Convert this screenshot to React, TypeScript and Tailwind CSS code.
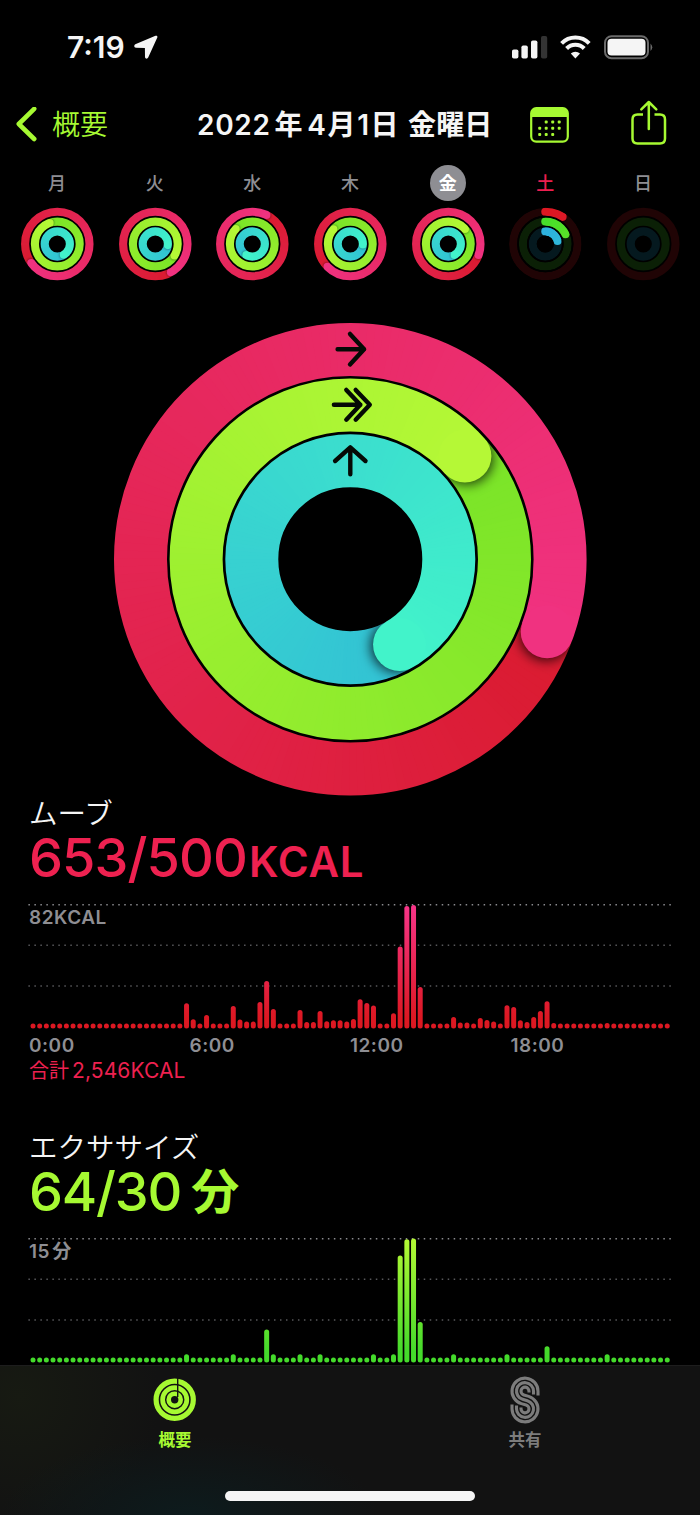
import { useId } from "react";
import clsx from "clsx";

const FONT = "font-['Inter','Noto_Sans_CJK_JP',sans-serif]";

type RingKind = {
  from: [number, number, number];
  to: [number, number, number];
  track: string;
};

const KINDS: RingKind[] = [
  { from: [218, 27, 48], to: [240, 50, 128], track: "#200405" },
  { from: [122, 228, 40], to: [181, 248, 54], track: "#0b2006" },
  { from: [50, 193, 212], to: [66, 243, 202], track: "#05191f" },
];

// colours of the very first degrees of each ring
const FRESH: [number, number, number][] = [
  [222, 24, 34],
  [72, 222, 42],
  [46, 178, 222],
];

const days = [
  { name: "月", ends: [594, 700, 509] },
  { name: "火", ends: [511, 481, 455] },
  { name: "水", ends: [386, 672, 568] },
  { name: "木", ends: [585, 671, 452] },
  { name: "金", ends: [470, 408, 510], active: true },
  { name: "土", ends: [32.5, 64, 76], holiday: true },
  { name: "日", ends: [0, 0, 0] },
];

function polar(c: number, r: number, deg: number) {
  const a = ((deg - 90) * Math.PI) / 180;
  return [c + r * Math.cos(a), c + r * Math.sin(a)];
}

function mix(a: number[], b: number[], t: number) {
  const [r, g, bl] = a.map((v, i) => Math.round(v + (b[i] - v) * t));
  return `rgb(${r},${g},${bl})`;
}

type RingProps = {
  c: number;
  r: number;
  width: number;
  end: number;
  index: number;
};

function Ring({ c, r, width, end, index }: RingProps) {
  const id = useId();
  const kind = KINDS[index];
  if (end === 0) {
    return <circle cx={c} cy={c} r={r} fill="none" stroke={kind.track} strokeWidth={width} />;
  }

  const over = end >= 360;
  const start = over ? end - 360 : 0;
  const from = over ? kind.from : FRESH[index];
  const to = over ? kind.to : kind.from;
  const step = 2;
  const count = Math.ceil((end - start) / step);
  const [ex, ey] = polar(c, r, end);
  const [sx, sy] = polar(c, r, start);
  const [shx, shy] = polar(c, r, end + (width * 3) / r);

  // each piece runs under the next ones, so no seams show
  const segment = (i: number) => {
    const a = start + i * step;
    const b = Math.min(a + step + 8, end);
    const [x1, y1] = polar(c, r, a);
    const [x2, y2] = polar(c, r, b);
    return (
      <path
        key={i}
        d={`M${x1} ${y1}A${r} ${r} 0 0 1 ${x2} ${y2}`}
        fill="none"
        stroke={mix(from, to, over ? i / count : (i / count) * 0.3)}
        strokeWidth={over ? width + 1.5 : width}
      />
    );
  };
  const all = Array.from({ length: count }, (_, i) => i);

  return (
    <g mask={`url(#${id}m)`}>
      <mask id={`${id}m`} maskUnits="userSpaceOnUse" x="-1" y="-1" width={c * 2 + 2} height={c * 2 + 2}>
        <circle cx={c} cy={c} r={r} fill="none" stroke="#fff" strokeWidth={width} />
      </mask>
      {!over && (
        <>
          <circle cx={c} cy={c} r={r} fill="none" stroke={kind.track} strokeWidth={width} />
          <circle cx={sx} cy={sy} r={width / 2} fill={mix(from, to, 0)} />
        </>
      )}
      {all.map(segment)}
      {over && (
        <>
          <filter id={`${id}f`} x="-50%" y="-50%" width="200%" height="200%">
            <feGaussianBlur stdDeviation={width * 0.11} />
          </filter>
          <circle
            cx={shx}
            cy={shy}
            r={width / 2}
            fill="#000"
            fillOpacity={width > 20 ? 0.75 : 0.4}
            filter={`url(#${id}f)`}
          />
          {all.slice(Math.floor(count * 0.7)).map(segment)}
        </>
      )}
      <circle cx={ex} cy={ey} r={width / 2} fill={over ? mix(from, to, 1) : mix(from, to, 0.3)} />
    </g>
  );
}

function SmallRings({ ends }: { ends: number[] }) {
  return (
    <svg width="74" height="74" viewBox="-0.3 0 74 74">
      {[32.2, 22.4, 12.6].map((r, i) => (
        <Ring key={r} c={37} r={r} width={8.1} end={ends[i]} index={i} />
      ))}
    </svg>
  );
}

function BigRings() {
  return (
    <svg width="474" height="474" viewBox="-0.3 -0.2 474 474">
      <Ring c={237} r={209.8} width={53} end={470.2} index={0} />
      <Ring c={237} r={154.2} width={53} end={408} index={1} />
      <Ring c={237} r={98.5} width={53} end={510} index={2} />
      <g fill="none" stroke="#050a05" strokeWidth="4.4" strokeLinecap="round" strokeLinejoin="round">
        <path d="M224.3 27h26.5M236.7 11.7 250.8 27l-14.1 15.3" />
        <path d="M220.6 82.5h26.5M233 67.7l14 14.8-14 15M242.4 67.7l14.1 14.8-14.1 15" />
        <path d="M237 152v-26.5M221.8 138.8 237 125.2l15.2 13.6" />
      </g>
    </svg>
  );
}

const SLOTS = 96;
const DOT = 5;

const moveBars: Record<number, number> = {
  23: 25.3, 24: 9.3, 26: 13.7, 30: 22.5, 31: 9.2, 32: 7, 33: 7, 34: 26.7, 35: 47.7, 36: 19.7,
  40: 18.7, 41: 6.5, 42: 6.5, 43: 17.7, 44: 7.3, 45: 8.3, 46: 8.3, 47: 7, 48: 9.7, 49: 29.3,
  50: 25.7, 51: 23, 54: 15.3, 55: 82, 56: 122.7, 57: 123.7, 58: 41.7, 63: 11.7, 64: 6, 65: 6,
  67: 10.7, 68: 8.5, 69: 7, 71: 23.3, 72: 21.7, 73: 8.3, 74: 6.7, 75: 11.7, 76: 17.7, 77: 27.3,
  78: 5.7, 86: 5.7,
};

const exerciseBars: Record<number, number> = {
  23: 8.3, 30: 8.3, 35: 33, 36: 8.3, 40: 8.3, 43: 8.3, 51: 8.3, 54: 8.3, 55: 107, 56: 123.3,
  57: 124, 58: 40.7, 63: 8.3, 71: 8.3, 77: 16.3, 86: 8.3,
};

type ChartProps = {
  bars: Record<number, number>;
  top: string;
  bottom: string;
  label: string;
};

function Chart({ bars, top, bottom, label }: ChartProps) {
  const id = useId();
  return (
    <div className="relative h-[126px]">
      <svg className="block" width="644" height="126" viewBox="0 0 644 126">
        <linearGradient id={id} gradientUnits="userSpaceOnUse" x1="0" y1="125" x2="0" y2="1">
          <stop offset="0.08" stopColor={bottom} />
          <stop offset="1" stopColor={top} />
        </linearGradient>
        {[1.7, 42.3, 83].map((y, i) => (
          <line
            key={y}
            x1="0.4"
            x2="643"
            y1={y}
            y2={y}
            stroke={i === 0 ? "#8a8a8e" : "#58585b"}
            strokeWidth="1.5"
            strokeDasharray="1.5 4.49"
          />
        ))}
        {Array.from({ length: SLOTS }, (_, i) => {
          const h = bars[i] ?? DOT;
          return (
            <rect
              key={i}
              x={2.5 + i * 6.676}
              y={125.6 - h}
              width={DOT}
              height={h}
              rx={DOT / 2}
              fill={`url(#${id})`}
            />
          );
        })}
      </svg>
      <span className="absolute left-[1px] top-[5px] whitespace-nowrap text-[19px] leading-[20px] font-semibold tracking-[0.5px] [word-spacing:-3px] text-[#8e8e93]">
        {label}
      </span>
    </div>
  );
}

function StatusBar() {
  return (
    <div className="flex h-[92px] items-center pt-[2px] pl-[67px] pr-[47px] text-[#f5f5f5]">
      <span className="w-[59px] text-[30px] font-semibold">7:19</span>
      <svg className="ml-[8px]" width="25" height="25" viewBox="0 0 25 25">
        <path
          d="M21.5.8 1.3 9.3C-.4 10.2.1 12.6 2 12.7L10.9 12.9 11 22C11.2 24 13.4 24.3 14.2 22.6L23.3 2.6C23.8 1.2 22.8.3 21.5.8Z"
          fill="currentColor"
        />
      </svg>
      <svg className="ml-auto" width="142" height="26" viewBox="0 0 142 26" fill="currentColor">
        <rect x="1" y="15.5" width="6.4" height="9" rx="1.8" />
        <rect x="10.4" y="11.5" width="6.4" height="13" rx="1.8" />
        <rect x="20" y="6.500" width="6.4" height="18" rx="1.8" />
        <rect x="30" y="2" width="6.2" height="22.5" rx="1.8" fill="#333" />
        <g fill="none" stroke="currentColor" strokeWidth="4">
          <path d="M50.6 9.3a19.2 19.2 0 0 1 27.6 0" />
          <path d="M55.6 14.5a12.2 12.2 0 0 1 17.6 0" />
        </g>
        <path d="M64.4 24.5 59.8 19.6a6.6 6.6 0 0 1 9.2 0Z" />
        <rect x="94" y="2.2" width="43" height="22" rx="6.5" fill="none" stroke="#6b6b6b" strokeWidth="2" />
        <rect x="96.5" y="4.8" width="38" height="16.8" rx="4" />
        <path d="M139.5 9.5q3.5 3.8 0 7.6Z" fill="#6b6b6b" />
      </svg>
    </div>
  );
}

function NavBar() {
  return (
    <div className="flex h-[66px] items-center pl-[16px] text-[#a6f932]">
      <svg width="22" height="36" viewBox="0 0 22 36">
        <path d="M18.2 1.8 2.8 17l15.4 15" fill="none" stroke="currentColor" strokeWidth="4.6" strokeLinecap="round" strokeLinejoin="round" />
      </svg>
      <span className="ml-[14px] w-[145px] text-[28px] font-[350]">概要</span>
      <h1 className="w-[301px] whitespace-nowrap text-[28px] font-semibold tracking-[0.7px] text-[#f5f5f5]">
        2022<span className="mx-[4px]">年</span>
        <span className="tracking-[1.6px]">4月1日</span>{" "}
        <span className="tracking-[0.2px]">金曜日</span>
      </h1>
      <svg className="ml-[32px]" width="39" height="36" viewBox="0 0 39 36">
        <rect x="1.2" y="1.2" width="36.6" height="33.4" rx="5" fill="none" stroke="currentColor" strokeWidth="2.2" />
        <path d="M1 10V6q0-5 5-5h27q5 0 5 5v4Z" fill="currentColor" />
        <g fill="currentColor">
          {[
            [16.2, 15], [22.7, 15], [29.2, 15],
            [9.7, 21.2], [16.2, 21.2], [22.7, 21.2], [29.2, 21.2],
            [9.7, 27.5], [16.2, 27.5], [22.7, 27.5],
          ].map(([x, y]) => (
            <rect key={`${x}-${y}`} x={x - 1.5} y={y - 1.5} width="3" height="3" rx="1" />
          ))}
        </g>
      </svg>
      <svg className="mb-[4px] ml-[62px]" width="36" height="46" viewBox="0 0 36 46" fill="none" stroke="currentColor" strokeWidth="2.5" strokeLinecap="round" strokeLinejoin="round">
        <path d="M12 14.5H6.5Q1.5 14.5 1.5 19.5V38.5Q1.5 43.5 6.5 43.5H29Q34 43.5 34 38.5V19.5Q34 14.5 29 14.5H23.5" strokeLinecap="butt" />
        <path d="M17.8 29V2.2M10.3 9.3l7.5-7.3 7.5 7.3" />
      </svg>
    </div>
  );
}

function WeekStrip() {
  return (
    <div className="flex justify-between pl-[20px] pr-[20px] pt-[7px]">
      {days.map((day) => (
        <div key={day.name} className="flex w-[74px] flex-col items-center">
          <span
            className={clsx(
              "flex size-9 items-center justify-center rounded-full pt-[1px] text-[18px] leading-none",
              day.active && "bg-[#8e8e93] font-bold text-white",
              day.holiday && "font-medium text-[#ed1f50]",
              !day.active && !day.holiday && "font-medium text-[#8e8e93]"
            )}
          >
            {day.name}
          </span>
          <div className="mt-[6px]">
            <SmallRings ends={day.ends} />
          </div>
        </div>
      ))}
    </div>
  );
}

// the three strands of the sharing "S": top and bottom radius, then how far each end runs on
const strands = [
  { r1: 13, r2: 4, e1: 4.3, e2: 1.3 },
  { r1: 8.5, r2: 8.5, e1: 3.3, e2: 3.3 },
  { r1: 4, r2: 13, e1: 1.3, e2: 4.3 },
];

function SharingIcon() {
  const c = 8.85;
  const nx = 0.28;
  const ny = 0.96;
  return (
    <svg width="32" height="48" viewBox="-16 -24 32 48" fill="none" stroke="currentColor" strokeWidth="3.1">
      {strands.map(({ r1, r2, e1, e2 }) => (
        <path
          key={r1}
          d={`M${r1} ${-c + e1}V${-c}A${r1} ${r1} 0 1 0 ${-nx * r1} ${-c + ny * r1}L${nx * r2} ${c - ny * r2}A${r2} ${r2} 0 1 1 ${-r2} ${c}V${c - e2}`}
        />
      ))}
    </svg>
  );
}

function TabBar() {
  return (
    <nav className="relative flex h-[150px] border-t border-[#1d1d1d] bg-[#121212] bg-[radial-gradient(ellipse_190px_80px_at_190px_150px,#0d1b1d,transparent),radial-gradient(ellipse_140px_140px_at_20px_30px,#171a12,transparent)]">
      <div className="flex w-1/2 flex-col items-center pt-[12px] text-[#a6f932]">
        <svg width="44" height="44" viewBox="0 0 44 44" fill="none" stroke="currentColor">
          <circle cx="21.7" cy="21.7" r="18.6" strokeWidth="5.2" />
          <circle cx="21.7" cy="21.7" r="12.1" strokeWidth="4.7" />
          <circle cx="21.7" cy="21.7" r="6" strokeWidth="4.6" />
          <path d="M24.7 0V19" stroke="#121212" strokeWidth="1.4" />
        </svg>
        <span className="mt-[6px] text-[16.5px] leading-[24px] font-bold">概要</span>
      </div>
      <div className="flex w-1/2 flex-col items-center pt-[10px] text-[#7c7c7c]">
        <SharingIcon />
        <span className="mt-[4px] text-[16.5px] leading-[24px] font-bold">共有</span>
      </div>
      <div className="absolute bottom-[14px] left-[225px] h-[10px] w-[250px] rounded-full bg-[#f5f5f5]" />
    </nav>
  );
}

export default function App() {
  return (
    <div lang="ja" className={clsx("flex h-[1515px] w-[700px] flex-col overflow-hidden bg-black", FONT)}>
      <main className="h-[1365px] overflow-hidden">
        <StatusBar />
        <NavBar />
        <WeekStrip />
        <div className="mt-[41px] flex justify-center">
          <BigRings />
        </div>

        <section className="pl-[28px]">
          <h2 className="h-[34px] pl-[1px] text-[28.5px] leading-[36px] font-[350] text-[#f5f5f5]">ムーブ</h2>
          <p className="flex h-[56px] items-baseline pl-[1px] whitespace-nowrap text-[54px] leading-[56px] font-medium tracking-[-0.9px] text-[#ee2150]">
            653/500<span className="ml-[2px] text-[42px] font-semibold tracking-[0.8px]">KCAL</span>
          </p>
          <div className="mt-[17px]">
            <Chart bars={moveBars} top="#f7358a" bottom="#dc1822" label="82KCAL" />
          </div>
          <div className="mt-[5px] flex text-[19px] leading-[24px] font-semibold tracking-[0.5px] text-[#8e8e93]">
            {["0:00", "6:00", "12:00", "18:00"].map((t) => (
              <span key={t} className="w-[160.5px] pl-[1px]">{t}</span>
            ))}
          </div>
          <p className="flex h-[25px] items-baseline pl-[1px] leading-[25px] text-[#ee2150]">
            <span className="text-[20px]">合計</span>
            <span className="ml-[3px] text-[21px] tracking-[0.1px]">2,546KCAL</span>
          </p>
        </section>

        <section className="mt-[47px] pl-[28px]">
          <h2 className="h-[34px] pl-[1px] text-[28.5px] leading-[36px] font-[350] text-[#f5f5f5]">エクササイズ</h2>
          <p className="flex h-[56px] items-baseline pl-[1px] whitespace-nowrap text-[54px] leading-[56px] font-medium tracking-[-1.2px] text-[#a6f932]">
            64/30<span className="relative bottom-[2px] ml-[10px] text-[48px] font-bold">分</span>
          </p>
          <div className="mt-[17px]">
            <Chart bars={exerciseBars} top="#b5f934" bottom="#44da2b" label="15 分" />
          </div>
        </section>
      </main>
      <TabBar />
    </div>
  );
}
